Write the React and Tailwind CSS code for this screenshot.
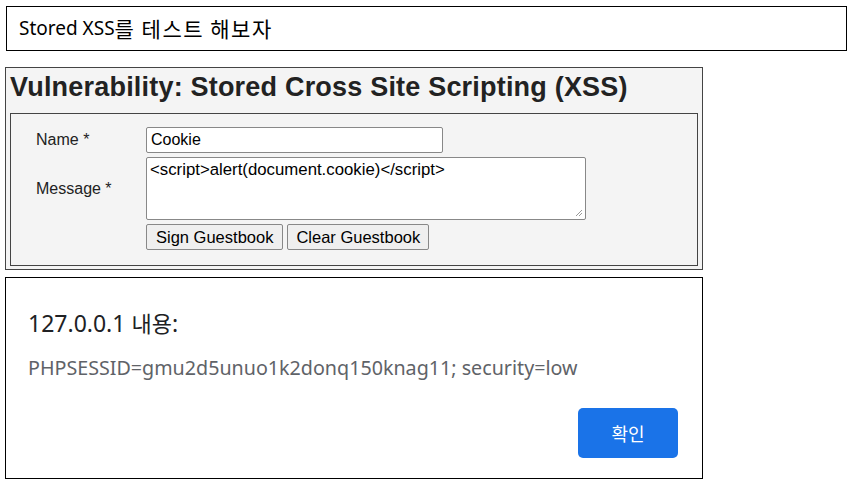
const kr = { fontFamily: '"Noto Sans", "Noto Sans CJK KR", sans-serif' };
const krOnly = { fontFamily: '"Noto Sans CJK KR", sans-serif' };

export default function App() {
  return (
    <div className="w-[852px] h-[485px] bg-white relative overflow-hidden">
      <div className="pt-[6px] pl-[6px]">
        <div className="w-[841px] h-[45px] border border-black flex items-center pl-[12px] text-black" style={kr}>
          <span className="text-[19px]">Stored XSS</span>
          <span className="text-[21px] tracking-[1.5px]" style={krOnly}>를 테스트 해보자</span>
        </div>
      </div>

      <div className="ml-[5px] mt-[16px] w-[698px] h-[203px] border border-[#444] bg-[#f4f4f4] px-[4px]" style={{ fontFamily: '"Liberation Sans", Arial, sans-serif' }}>
        <h1 className="text-[27px] font-bold text-[#222] leading-[32px] pt-[3px] tracking-[0.2px]">
          Vulnerability: Stored Cross Site Scripting (XSS)
        </h1>
        <div className="mt-[10px] h-[153px] border border-[#444] pl-[25px] pt-[13px] text-[16px] text-[#222]">
          <div className="flex items-center h-[26px]">
            <span className="w-[110px]">Name *</span>
            <div className="w-[297px] h-[26px] border border-[#888] bg-white rounded-[2px] px-[4px] flex items-center text-black">Cookie</div>
          </div>
          <div className="flex items-center mt-[4px]">
            <span className="w-[110px]">Message *</span>
            <div className="relative w-[440px] h-[63px] border border-[#888] bg-white rounded-[2px] px-[3px] pt-[2px] text-black text-[16.8px] leading-[20px]">
              &lt;script&gt;alert(document.cookie)&lt;/script&gt;
              <svg className="absolute right-[2px] bottom-[2px]" width="8" height="8" viewBox="0 0 8 8">
                <path d="M7 1 L1 7 M7 4 L4 7" stroke="#999" strokeWidth="1" />
              </svg>
            </div>
          </div>
          <div className="flex gap-[4px] mt-[4px] ml-[110px] text-[16.5px]">
            <div className="h-[26px] px-[9px] border border-[#888] bg-[#efefef] rounded-[2px] flex items-center text-black">Sign Guestbook</div>
            <div className="h-[26px] px-[8px] border border-[#888] bg-[#efefef] rounded-[2px] flex items-center text-black">Clear Guestbook</div>
          </div>
        </div>
      </div>

      <div className="ml-[5px] mt-[7px] w-[698px] h-[202px] border border-black bg-white pl-[22px]" style={kr}>
        <div className="pt-[28px] text-[23px] text-[#202124] leading-[32px]">
          127.0.0.1 <span className="text-[22px]" style={krOnly}>내용</span>:
        </div>
        <div className="mt-[16px] text-[19.7px] text-[#5f6368] leading-[26px]">PHPSESSID=gmu2d5unuo1k2donq150knag11; security=low</div>
        <div className="flex justify-end pr-[24px] mt-[27px]">
          <div className="w-[100px] h-[50px] rounded-[5px] bg-[#1a73e8] text-white text-[18px] flex items-center justify-center" style={krOnly}>확인</div>
        </div>
      </div>
    </div>
  );
}
